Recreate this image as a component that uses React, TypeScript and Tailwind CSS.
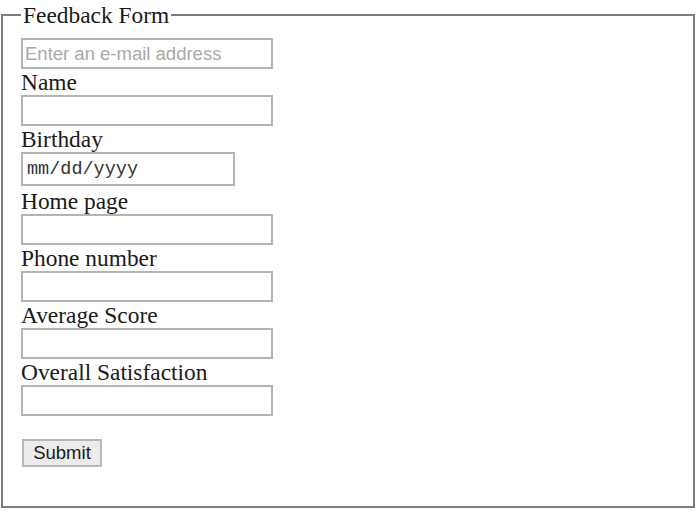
export default function App() {
  const input =
    "block h-[31px] w-[252px] border-2 border-[#b4b4b4] bg-white px-[2px] font-['Liberation_Sans',Arial,sans-serif] text-[18.5px] text-[#222] outline-none placeholder:text-[#a9a9a9]";
  const label = "block h-[26px] leading-[26px]";

  return (
    <div className="min-h-[511px] bg-white font-['Liberation_Serif','Times_New_Roman',serif] text-[23.4px] text-[#1a1a1a]">
      <form onSubmit={(e) => e.preventDefault()}>
        <fieldset className="ml-[1px] h-[508px] w-[694px] border-2 border-[#7c7c7c] px-[18px] pt-[8px]">
          <legend className="ml-0 px-[2px] leading-[30px]">Feedback Form</legend>
          <input type="email" placeholder="Enter an e-mail address" className={input} />
          <label className={label}>Name</label>
          <input type="text" className={input} />
          <label className={label}>Birthday</label>
          <input
            type="text"
            placeholder="mm/dd/yyyy"
            className="mb-[2px] block h-[34px] w-[214px] border-2 border-[#b4b4b4] bg-white px-[4px] font-['Liberation_Mono','Courier_New',monospace] text-[18.5px] outline-none placeholder:text-[#333]"
          />
          <label className={label}>Home page</label>
          <input type="url" className={input} />
          <label className={label}>Phone number</label>
          <input type="tel" className={input} />
          <label className={label}>Average Score</label>
          <input type="text" className={input} />
          <label className={label}>Overall Satisfaction</label>
          <input type="text" className={input} />
          <button
            type="submit"
            className="mt-[23px] ml-[1px] h-[28px] w-[80px] border-2 border-[#b8b8b8] bg-[#ececec] font-['Liberation_Sans',Arial,sans-serif] text-[18.5px] leading-none text-[#1a1a1a]"
          >
            Submit
          </button>
        </fieldset>
      </form>
    </div>
  );
}
